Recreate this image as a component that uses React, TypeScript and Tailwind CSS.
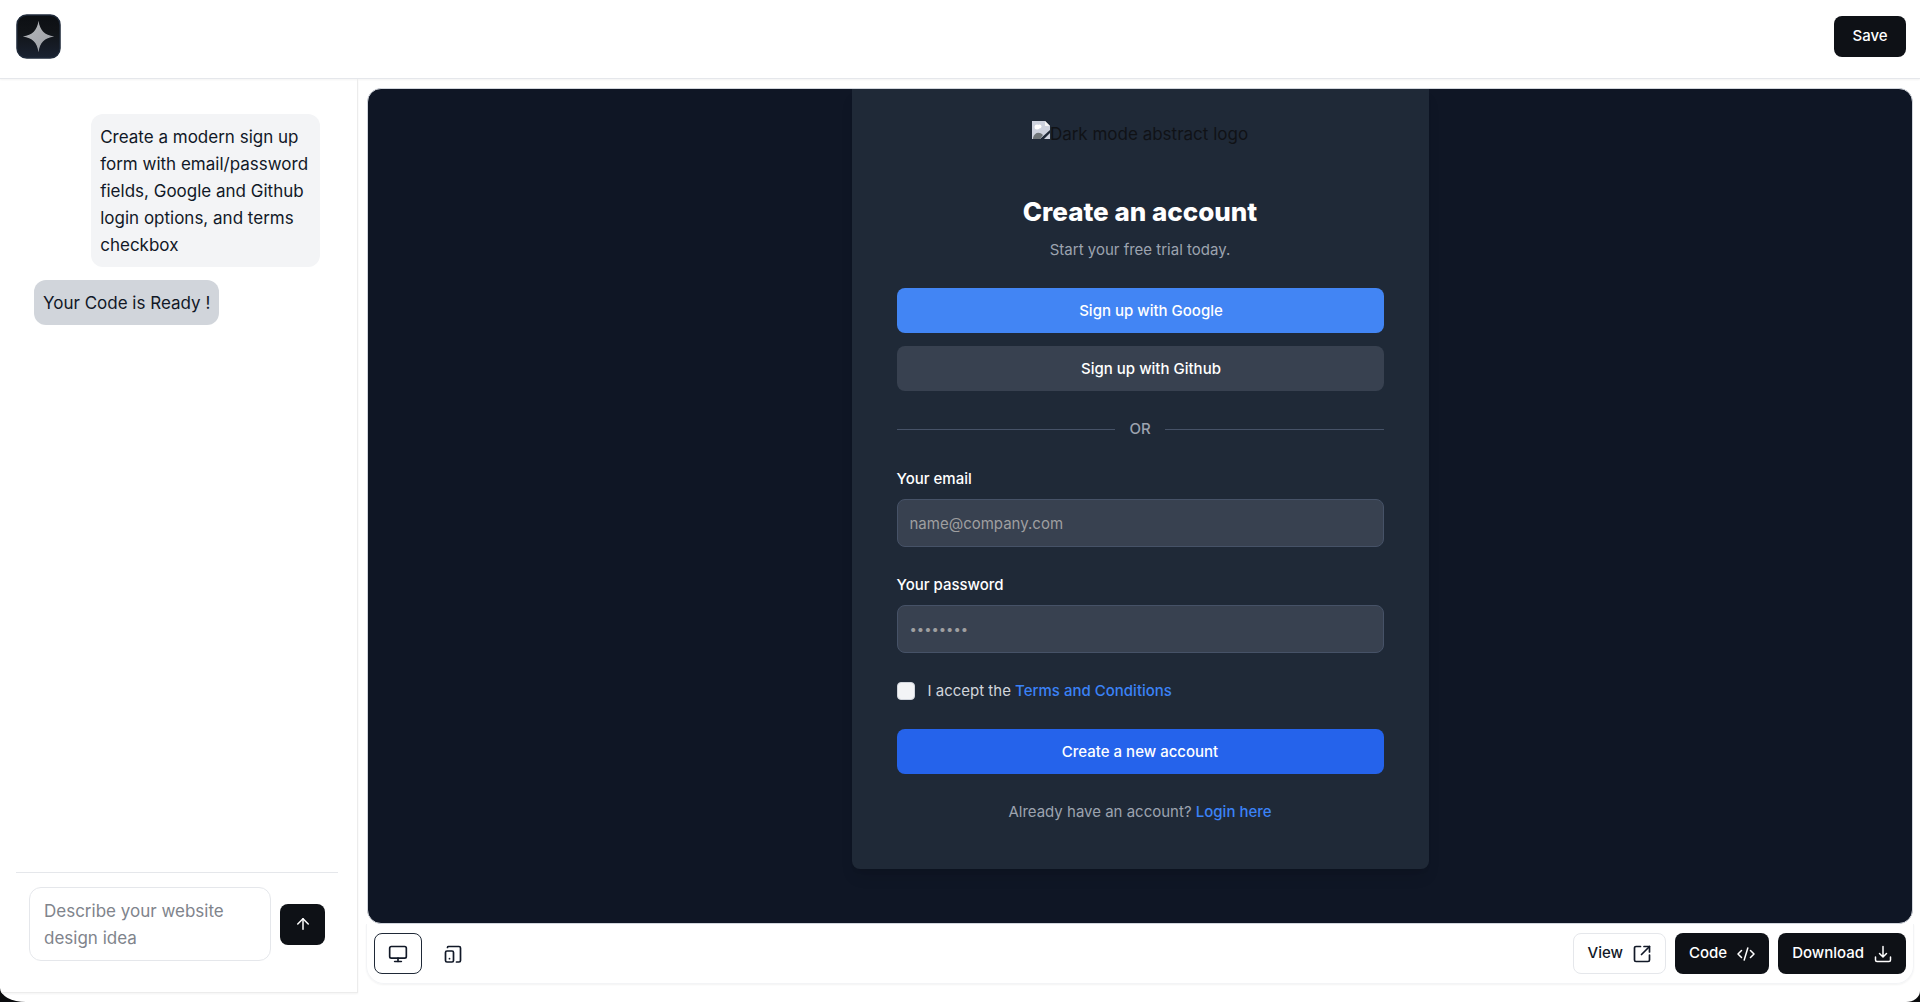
import { ArrowUp, Monitor } from "lucide-react";

const font = "font-['Inter','Liberation_Sans',sans-serif]";

const darkButton =
    "flex items-center justify-center bg-[#0e1116] text-white text-[15px] font-medium rounded-lg h-[41px]";

const inputStyle =
    "block w-full h-12 px-3 mt-2 rounded-lg bg-[#384150] border border-[#465267] leading-6 text-white placeholder:text-[#9f9fa0]";

const Logo = () => (
    <svg className="w-[45px] h-[45px]" viewBox="0 0 46 46">
        <defs>
            <linearGradient id="logoBg" x1="0" y1="0" x2="0" y2="1">
                <stop offset="0" stopColor="#0c0f13" />
                <stop offset="0.4" stopColor="#111418" />
                <stop offset="1" stopColor="#1a2231" />
            </linearGradient>
            <linearGradient id="logoStar" x1="0" y1="0" x2="1" y2="1">
                <stop offset="0" stopColor="#b6b8bb" />
                <stop offset="1" stopColor="#9a9da4" />
            </linearGradient>
        </defs>
        <rect x="1" y="1" width="44" height="44" rx="10" fill="url(#logoBg)" stroke="#1f2a3a" strokeWidth="1.5" />
        <path
            d="M23 7C24.5 17 29 21.5 39 23C29 24.5 24.5 29 23 39C21.5 29 17 24.5 7 23C17 21.5 21.5 17 23 7Z"
            fill="url(#logoStar)"
        />
    </svg>
);

const ResponsiveIcon = () => (
    <svg className="w-[18px] h-[18px]" viewBox="0 0 18 18" fill="none" stroke="currentColor" strokeWidth="1.7" strokeLinecap="round" strokeLinejoin="round">
        <rect x="1.5" y="6" width="8" height="11" rx="1.5" />
        <path d="M3.5 2.5V2.3A1 1 0 0 1 4.5 1.5H15A1.5 1.5 0 0 1 16.5 3V15.5A1.5 1.5 0 0 1 15 17H12.5" />
        <path d="M5.5 13.5V13.7" />
    </svg>
);

const OpenIcon = () => (
    <svg className="w-[18px] h-[18px]" viewBox="0 0 18 18" fill="none" stroke="currentColor" strokeWidth="1.7" strokeLinecap="round" strokeLinejoin="round">
        <path d="M7.5 1.5H3A1.5 1.5 0 0 0 1.5 3V15A1.5 1.5 0 0 0 3 16.5H15A1.5 1.5 0 0 0 16.5 15V10" />
        <path d="M11 1.5H16.5V7" />
        <path d="M16.5 1.5L8.5 9.5" />
    </svg>
);

const CodeIcon = () => (
    <svg className="w-[18px] h-[18px]" viewBox="0 0 18 18" fill="none" stroke="currentColor" strokeWidth="1.5" strokeLinecap="round" strokeLinejoin="round">
        <path d="M4.5 5.5L1 9L4.5 12.5M13.5 5.5L17 9L13.5 12.5M10.8 3L7.2 15" />
    </svg>
);

const DownloadIcon = () => (
    <svg className="w-[18px] h-[18px]" viewBox="0 0 18 18" fill="none" stroke="currentColor" strokeWidth="1.5" strokeLinecap="round" strokeLinejoin="round">
        <path d="M9 1.5V11.5M5.5 8.5L9 12L12.5 8.5M1.5 12V15A1.5 1.5 0 0 0 3 16.5H15A1.5 1.5 0 0 0 16.5 15V12" />
    </svg>
);

const BrokenImage = () => (
    <svg className="w-[18px] h-[18px]" viewBox="0 0 18 18">
        <path d="M0 0H13L18 5V9L8 18H0Z" fill="#cdd2de" />
        <path d="M13 0L18 5H13Z" fill="#f5f5f5" />
        <circle cx="5" cy="6" r="2.5" fill="#fff" />
        <circle cx="7.5" cy="5.5" r="2" fill="#fff" />
        <path d="M1 17C2 12 7 10 11 14L8 18H1Z" fill="#6f7578" />
        <path d="M18 12V18H12Z" fill="#cdd2de" />
    </svg>
);

const Sidebar = () => (
    <aside className="w-[358px] shrink-0 mb-[9px] flex flex-col border-r border-b border-[#ececec] shadow-xs px-4">
        <div className="flex-1 flex flex-col gap-[13px] pl-[18px] pr-[21px] pt-[35px] text-[17px] leading-[27px] text-[#111827]">
            <p className="self-end max-w-[80%] bg-[#f3f4f6] rounded-xl px-[9px] pt-[10px] pb-2">
                Create a modern sign up form with email/password fields, Google and
                Github login options, and terms checkbox
            </p>
            <p className="self-start bg-[#d1d5db] rounded-xl px-[9px] pt-[10px] pb-2">
                Your Code is Ready !
            </p>
        </div>
        <form className="flex items-center gap-[9px] border-t border-gray-200 pt-[14px] pb-[31px] px-[13px] mr-[3px]">
            <textarea
                rows={2}
                aria-label="Website design idea"
                placeholder="Describe your website design idea"
                className="flex-1 min-w-0 h-[74px] resize-none overflow-hidden rounded-xl border border-gray-200 px-[14px] pt-[10px] pb-2 text-[17px] leading-[27px] placeholder:text-[#80848c]"
            />
            <button type="button" aria-label="Send" className={`${darkButton} w-[45px]`}>
                <ArrowUp className="w-[18px] h-[18px]" strokeWidth={2} />
            </button>
        </form>
    </aside>
);

const SignUpCard = () => (
    <form className="w-[577px] self-start bg-[#1f2937] rounded-b-lg shadow-lg px-[45px] pt-8 pb-[45px] text-[15px] leading-6">
        <div className="flex justify-center h-[73px] text-[17px] leading-[27px] text-[#101216]">
            <BrokenImage />
            <span>Dark mode abstract logo</span>
        </div>
        <h1 className="text-center text-[26px] leading-9 font-extrabold text-white">Create an account</h1>
        <p className="mt-2 text-center text-[#9ca3af]">Start your free trial today.</p>

        <button type="button" className="mt-[26px] w-full h-[45px] pl-[22px] rounded-lg bg-[#4285f4] text-white font-medium">
            Sign up with Google
        </button>
        <button type="button" className="mt-[13px] w-full h-[45px] pl-[22px] rounded-lg bg-[#384150] text-white font-medium">
            Sign up with Github
        </button>

        <div className="mt-[26px] flex items-center gap-[14px]">
            <hr className="flex-1 border-[#465267]" />
            <span className="font-medium text-[#9ca3af]">OR</span>
            <hr className="flex-1 border-[#465267]" />
        </div>

        <div className="mt-[26px]">
            <label htmlFor="email" className="block font-medium text-white">Your email</label>
            <input id="email" type="email" placeholder="name@company.com" className={`${inputStyle} text-[15px]`} />
        </div>
        <div className="mt-[26px]">
            <label htmlFor="password" className="block font-medium text-white">Your password</label>
            <input id="password" type="password" placeholder="••••••••" className={`${inputStyle} text-[13px]`} />
        </div>

        <div className="mt-[26px] flex items-center gap-[13px]">
            <input id="terms" type="checkbox" className="appearance-none w-[18px] h-[18px] rounded bg-[#f3f4f6] border border-gray-300" />
            <label htmlFor="terms" className="text-[#d1d5db]">
                I accept the <a href="#" className="font-medium text-[#3b82f6]">Terms and Conditions</a>
            </label>
        </div>

        <button type="button" className="mt-[26px] block w-full h-[45px] rounded-lg bg-[#2563eb] text-white font-medium">
            Create a new account
        </button>
        <p className="mt-[26px] text-center text-[#9ca3af]">
            Already have an account? <a href="#" className="font-medium text-[#3b82f6]">Login here</a>
        </p>
    </form>
);

const Toolbar = () => (
    <div className="flex items-center h-[60px] px-[7px] rounded-b-[18px] border border-t-0 border-gray-100 shadow-xs">
        <div className="flex-1 flex items-center gap-[7px]">
            <button aria-label="Desktop view" className="w-12 h-[41px] rounded-lg border border-[#1f2937] text-[#111827] flex items-center justify-center">
                <Monitor className="w-5 h-5" strokeWidth={2} />
            </button>
            <button aria-label="Mobile view" className="w-12 h-[41px] text-[#111827] flex items-center justify-center">
                <ResponsiveIcon />
            </button>
        </div>
        <div className="flex items-center gap-[9px]">
            <button className="h-[41px] px-[14px] flex items-center gap-[10px] rounded-lg border border-gray-200 bg-white text-[#111827] text-[15px] font-medium">
                View <OpenIcon />
            </button>
            <button className={`${darkButton} px-[14px] gap-[10px]`}>
                Code <CodeIcon />
            </button>
            <button className={`${darkButton} px-[14px] gap-[10px]`}>
                Download <DownloadIcon />
            </button>
        </div>
    </div>
);

export default function App() {
    return (
        <div className="bg-[#0b0c0e]">
            <div className={`${font} h-screen flex flex-col bg-white overflow-hidden rounded-bl-[26px_14px] rounded-br-[14px_11px]`}>
                <header className="h-[79px] shrink-0 flex items-start justify-between pl-4 pr-[14px] pt-[14px] border-b border-gray-200 shadow-xs">
                    <Logo />
                    <button className={`${darkButton} w-[72px] mt-[2px]`}>Save</button>
                </header>
                <div className="flex-1 min-h-0 flex">
                    <Sidebar />
                    <main className="flex-1 min-w-0 flex flex-col pl-2 pr-[6px] pt-[9px] pb-[18px]">
                        <div className="flex-1 min-h-0 mx-px flex justify-center overflow-hidden rounded-[14px] border border-gray-300 bg-[#0f1625]">
                            <SignUpCard />
                        </div>
                        <Toolbar />
                    </main>
                </div>
            </div>
        </div>
    );
}
